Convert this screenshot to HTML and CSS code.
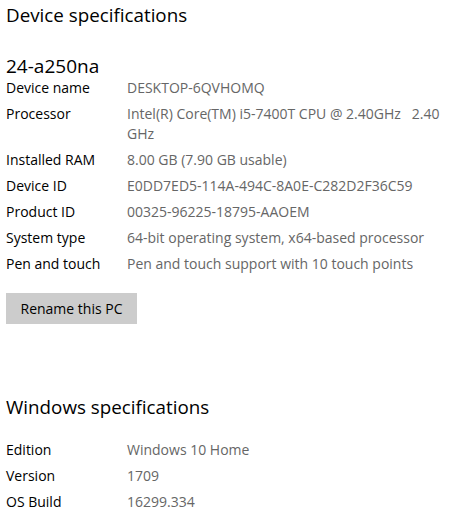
FILE: index.html
```html
<!DOCTYPE html>
<html>
<head>
<meta charset="utf-8">
<link rel="stylesheet" href="styles.css">
</head>
<body>
<div class="page">
  <h1 class="title">Device specifications</h1>
  <h2 class="device">24-a250na</h2>
  <div class="specs">
    <div class="row"><span class="label">Device name</span><span class="value">DESKTOP-6QVHOMQ</span></div>
    <div class="row"><span class="label">Processor</span><span class="value">Intel(R) Core(TM) i5-7400T CPU @ 2.40GHz&nbsp;&nbsp; 2.40<br>GHz</span></div>
    <div class="row"><span class="label">Installed RAM</span><span class="value">8.00 GB (7.90 GB usable)</span></div>
    <div class="row"><span class="label">Device ID</span><span class="value">E0DD7ED5-114A-494C-8A0E-C282D2F36C59</span></div>
    <div class="row"><span class="label">Product ID</span><span class="value">00325-96225-18795-AAOEM</span></div>
    <div class="row"><span class="label">System type</span><span class="value">64-bit operating system, x64-based processor</span></div>
    <div class="row"><span class="label">Pen and touch</span><span class="value">Pen and touch support with 10 touch points</span></div>
  </div>
  <button class="rename">Rename this PC</button>
  <h1 class="title win">Windows specifications</h1>
  <div class="specs">
    <div class="row"><span class="label">Edition</span><span class="value">Windows 10 Home</span></div>
    <div class="row"><span class="label">Version</span><span class="value">1709</span></div>
    <div class="row"><span class="label">OS Build</span><span class="value">16299.334</span></div>
  </div>
</div>
</body>
</html>
```
FILE: styles.css
```css
html, body {
  margin: 0;
  padding: 0;
  background: #ffffff;
}
body {
  font-family: "Open Sans", "Noto Sans", sans-serif;
  color: #000000;
}
.page {
  padding: 0 6px;
  display: flex;
  flex-direction: column;
  align-items: flex-start;
}
.title {
  font-size: 18.8px;
  font-weight: 400;
  line-height: 30px;
  margin: 0;
}
.device {
  font-size: 19px;
  font-weight: 400;
  line-height: 24px;
  margin: 24px 0 0;
}
.specs {
  display: flex;
  flex-direction: column;
  gap: 6px;
  font-size: 14px;
  line-height: 20px;
}
.row {
  display: grid;
  grid-template-columns: 121px auto;
}
.label {
  color: #000000;
}
.value {
  color: #666666;
}
.rename {
  margin-top: 19px;
  width: 131px;
  height: 31px;
  border: none;
  background: #cccccc;
  color: #000000;
  font-family: "Open Sans", "Noto Sans", sans-serif;
  font-size: 14px;
  padding: 0;
}
.win {
  margin-top: 68px;
  margin-bottom: 18px;
}
```
